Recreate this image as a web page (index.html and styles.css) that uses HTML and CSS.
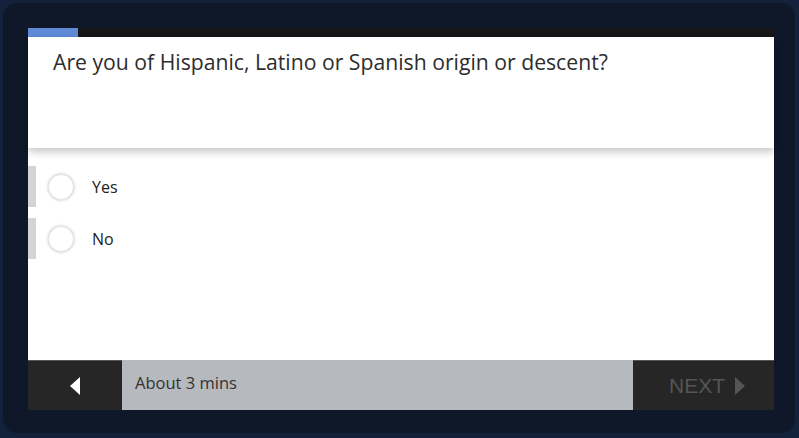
FILE: index.html
```html
<!DOCTYPE html>
<html>
<head>
<meta charset="utf-8">
<link rel="stylesheet" href="styles.css">
</head>
<body>
<div class="frame">
  <div class="survey">
    <div class="progress"><div class="progress-fill"></div></div>
    <div class="question">Are you of Hispanic, Latino or Spanish origin or descent?</div>
    <div class="options">
      <label class="option"><span class="tab"></span><span class="radio"></span><span class="label">Yes</span></label>
      <label class="option"><span class="tab"></span><span class="radio"></span><span class="label">No</span></label>
    </div>
    <div class="footer">
      <div class="back">
        <svg width="10" height="18" viewBox="0 0 10 18"><path d="M10 0 L10 18 L0 9 Z" fill="#ffffff"/></svg>
      </div>
      <div class="time">About 3 mins</div>
      <div class="next">
        <span>NEXT</span>
        <svg width="10" height="18" viewBox="0 0 10 18"><path d="M0 0 L0 18 L10 9 Z" fill="#555555"/></svg>
      </div>
    </div>
  </div>
</div>
</body>
</html>
```

FILE: styles.css
```css
html, body {
  margin: 0;
  padding: 0;
  background: #13213a;
  font-family: "Open Sans", "Lato", sans-serif;
}
.frame {
  margin: 3px 4px 0 3px;
  height: 430px;
  box-sizing: border-box;
  border-radius: 14px;
  background: #0f1828;
  padding: 25px 21px 23px 25px;
}
.survey {
  height: 382px;
  background: #ffffff;
  display: flex;
  flex-direction: column;
}
.progress {
  height: 9px;
  background: #161616;
}
.progress-fill {
  width: 50px;
  height: 100%;
  background: #5f8bd6;
}
.question {
  height: 111px;
  box-sizing: border-box;
  padding: 10px 25px 0 25px;
  font-size: 21.2px;
  color: #2d2d2d;
  background: #fff;
  box-shadow: 0 4px 8px rgba(0,0,0,0.22);
  position: relative;
  z-index: 1;
}
.options {
  flex: 1;
  padding-top: 18px;
  display: flex;
  flex-direction: column;
  gap: 11px;
}
.option {
  height: 41px;
  display: flex;
  align-items: center;
}
.tab {
  width: 8px;
  height: 100%;
  background: #d4d4d4;
}
.radio {
  width: 24px;
  height: 24px;
  margin-left: 12px;
  border-radius: 50%;
  background: #fff;
  border: 1px solid #e6e6e6;
  box-shadow: 0 0 3px rgba(0,0,0,0.25);
}
.label {
  margin-left: 18px;
  font-size: 16px;
  color: #222;
}
.footer {
  height: 50px;
  display: flex;
}
.back {
  width: 94px;
  background: #262626;
  display: flex;
  align-items: center;
  justify-content: center;
  border-top: 1px solid #555;
  box-sizing: border-box;
}
.time {
  flex: 1;
  background: #b6b9bd;
  color: #333;
  font-size: 16.5px;
  padding: 11px 0 0 13px;
  box-sizing: border-box;
}
.next {
  width: 141px;
  background: #262626;
  display: flex;
  align-items: center;
  justify-content: flex-end;
  padding-right: 29px;
  gap: 10px;
  box-sizing: border-box;
  color: #555;
  font-family: "Liberation Sans", sans-serif;
  font-size: 21px;
  border-top: 1px solid #555;
}
```
